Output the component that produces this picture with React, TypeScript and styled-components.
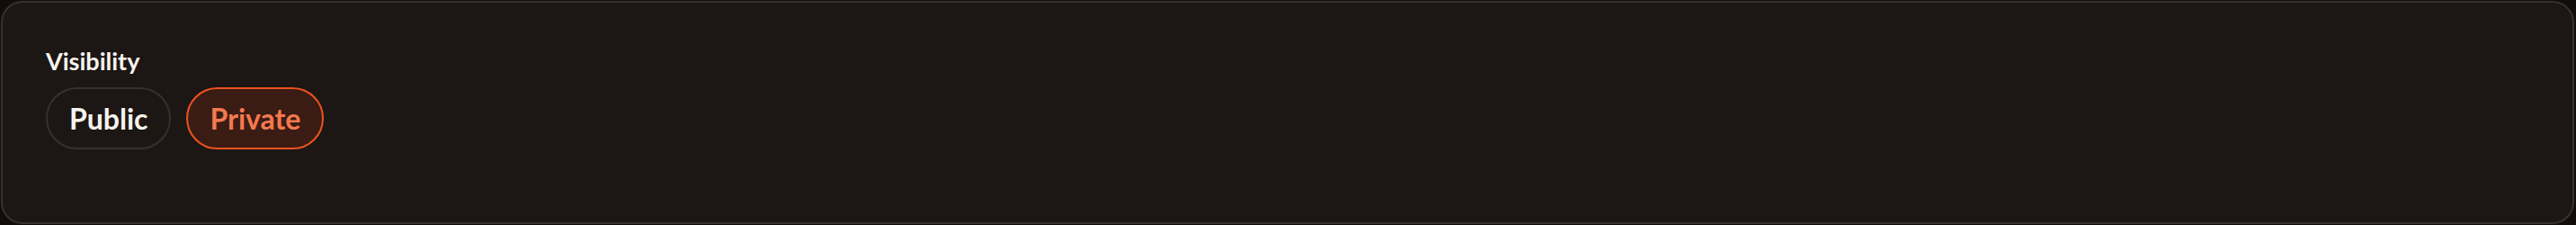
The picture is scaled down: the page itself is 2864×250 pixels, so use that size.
import React, { useState } from "react";
import styled, { createGlobalStyle } from "styled-components";

const GlobalStyle = createGlobalStyle`
  html, body {
    margin: 0;
    padding: 0;
    background: #110d0b;
  }
  body {
    font-family: "Lato", "Inter", sans-serif;
  }
`;

const Page = styled.div`
  padding: 1px 2px 1px 1px;
  box-sizing: border-box;
  width: 2864px;
  height: 250px;
`;

const Card = styled.section`
  box-sizing: border-box;
  height: 248px;
  background: #1c1714;
  border: 2px solid #38302c;
  border-radius: 24px;
  padding: 50px 48px;
  display: flex;
  flex-direction: column;
  gap: 14px;
`;

const Label = styled.span`
  color: #f7f3ef;
  font-size: 27px;
  font-weight: 700;
  line-height: 30px;
`;

const Options = styled.div`
  display: flex;
  gap: 17px;
`;

const Pill = styled.button<{ $active?: boolean }>`
  box-sizing: border-box;
  height: 69px;
  padding: 0 24px;
  border-radius: 999px;
  border: 2px solid ${(p) => (p.$active ? "#ee5220" : "#37302c")};
  background: ${(p) => (p.$active ? "#3a1c14" : "transparent")};
  color: ${(p) => (p.$active ? "#f4794d" : "#f7f3ef")};
  font-family: "Lato", "Inter", sans-serif;
  font-size: 32px;
  font-weight: 700;
  cursor: pointer;
`;

export default function App() {
  const [visibility, setVisibility] = useState("private");
  return (
    <>
      <GlobalStyle />
      <Page>
        <Card>
          <Label>Visibility</Label>
          <Options>
            <Pill $active={visibility === "public"} onClick={() => setVisibility("public")}>
              Public
            </Pill>
            <Pill $active={visibility === "private"} onClick={() => setVisibility("private")}>
              Private
            </Pill>
          </Options>
        </Card>
      </Page>
    </>
  );
}
